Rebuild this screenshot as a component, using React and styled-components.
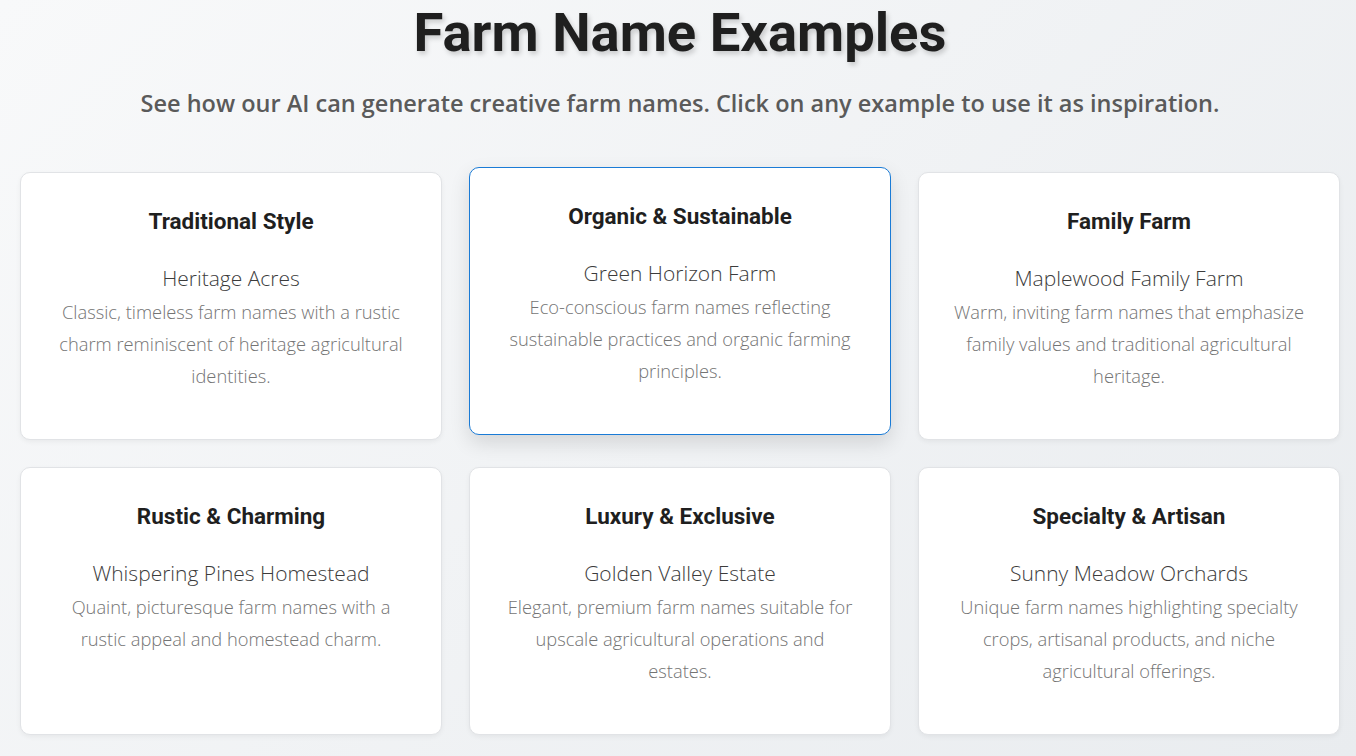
import { styled, createGlobalStyle } from 'styled-components'

const GlobalStyle = createGlobalStyle`
  * {
    box-sizing: border-box;
  }
  html, body {
    margin: 0;
    padding: 0;
  }
  body {
    min-height: 100vh;
    background: linear-gradient(135deg, #f8f9fa 0%, #e9ecef 100%);
    font-family: 'Open Sans', 'Liberation Sans', sans-serif;
    color: #222;
  }
`

const StyledSection = styled.section`
  padding: 0 16px 20px 20px;
`
const StyledHeading = styled.h1`
  margin: 0;
  text-align: center;
  font-family: Roboto, 'Liberation Sans', sans-serif;
  font-weight: 700;
  font-size: 54.4px;
  line-height: 1.2;
  color: #1f1f1f;
  text-shadow: 2px 3px 5px rgba(0, 0, 0, 0.18);
`
const StyledLead = styled.p`
  margin: 21px 0 50px;
  text-align: center;
  font-size: 23.5px;
  font-weight: 600;
  line-height: 1.5;
  color: #5a5a5a;
`
const StyledGrid = styled.div`
  display: grid;
  grid-template-columns: repeat(3, 1fr);
  gap: 27px;
`
const StyledCard = styled.div`
  background: #fff;
  border: 1px solid ${(p) => (p.$active ? '#1a7bd6' : '#e1e3e6')};
  border-radius: 10px;
  padding: 35.5px 34px 47px;
  text-align: center;
  cursor: pointer;
  box-shadow: ${(p) =>
    p.$active ? '0 8px 20px rgba(0, 0, 0, 0.12)' : '0 2px 5px rgba(0, 0, 0, 0.05)'};
  transform: ${(p) => (p.$active ? 'translateY(-5px)' : 'none')};
`
const StyledTitle = styled.h3`
  margin: 0 0 28px;
  font-family: Roboto, 'Liberation Sans', sans-serif;
  font-weight: 700;
  font-size: 22.5px;
  line-height: 1.2;
  color: #1f1f1f;
`
const StyledName = styled.div`
  font-size: 21px;
  font-weight: 300;
  line-height: 1.5;
  color: #3c3c3c;
  margin-bottom: 1px;
`
const StyledDesc = styled.p`
  margin: 0;
  font-size: 18.3px;
  font-weight: 300;
  line-height: 32px;
  color: #747474;
`

const examples = [
  {
    title: 'Traditional Style',
    name: 'Heritage Acres',
    desc: 'Classic, timeless farm names with a rustic charm reminiscent of heritage agricultural identities.',
  },
  {
    title: 'Organic & Sustainable',
    name: 'Green Horizon Farm',
    desc: 'Eco-conscious farm names reflecting sustainable practices and organic farming principles.',
    active: true,
  },
  {
    title: 'Family Farm',
    name: 'Maplewood Family Farm',
    desc: 'Warm, inviting farm names that emphasize family values and traditional agricultural heritage.',
  },
  {
    title: 'Rustic & Charming',
    name: 'Whispering Pines Homestead',
    desc: 'Quaint, picturesque farm names with a rustic appeal and homestead charm.',
  },
  {
    title: 'Luxury & Exclusive',
    name: 'Golden Valley Estate',
    desc: 'Elegant, premium farm names suitable for upscale agricultural operations and estates.',
  },
  {
    title: 'Specialty & Artisan',
    name: 'Sunny Meadow Orchards',
    desc: 'Unique farm names highlighting specialty crops, artisanal products, and niche agricultural offerings.',
  },
]

function App() {
  return (
    <>
      <GlobalStyle />
      <StyledSection>
        <StyledHeading>Farm Name Examples</StyledHeading>
        <StyledLead>
          See how our AI can generate creative farm names. Click on any example to use it as
          inspiration.
        </StyledLead>
        <StyledGrid>
          {examples.map((item) => (
            <StyledCard key={item.title} $active={item.active}>
              <StyledTitle>{item.title}</StyledTitle>
              <StyledName>{item.name}</StyledName>
              <StyledDesc>{item.desc}</StyledDesc>
            </StyledCard>
          ))}
        </StyledGrid>
      </StyledSection>
    </>
  )
}

export default App
